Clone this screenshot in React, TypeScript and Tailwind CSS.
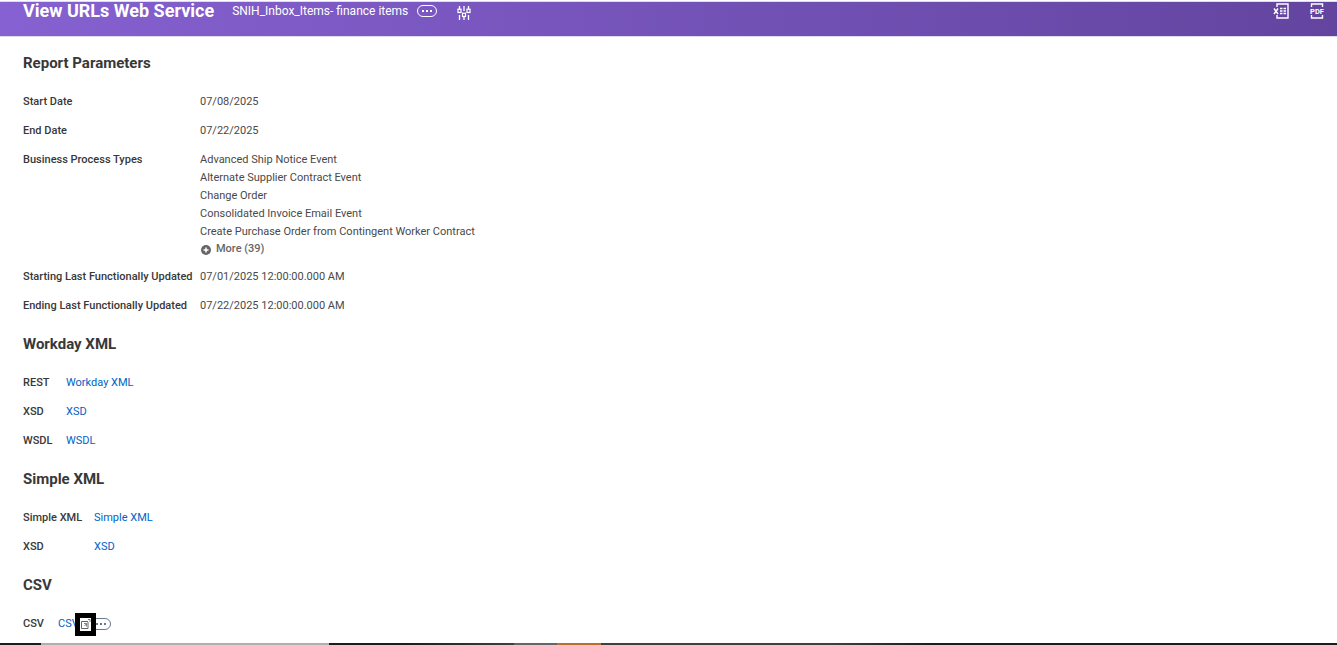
import type { ReactNode } from "react";

const processTypes = [
  "Advanced Ship Notice Event",
  "Alternate Supplier Contract Event",
  "Change Order",
  "Consolidated Invoice Email Event",
  "Create Purchase Order from Contingent Worker Contract",
];

function Section({ title, children }: { title: string; children: ReactNode }) {
  return (
    <section className="pb-3">
      <h2 className="mb-3 text-[15px] leading-6 font-bold text-[#383838]">{title}</h2>
      <dl>{children}</dl>
    </section>
  );
}

function Row({ label, width, children }: { label: string; width: string; children: ReactNode }) {
  return (
    <div className="flex py-[7px] text-[11px] leading-[15px]">
      <dt className={`${width} shrink-0 font-medium text-[#383838]`}>{label}</dt>
      <dd className="text-[#494949]">{children}</dd>
    </div>
  );
}

function Link({ children }: { children: ReactNode }) {
  return (
    <a href="#" className="text-[#0062c4] hover:underline">
      {children}
    </a>
  );
}

function Dots({ className }: { className: string }) {
  return (
    <svg viewBox="0 0 20 12" className={className} fill="none" stroke="currentColor" aria-hidden="true">
      <rect x="0.5" y="0.5" width="19" height="11" rx="5.5" />
      <path d="M5 5h2v2H5zM9 5h2v2H9zM13 5h2v2h-2z" fill="currentColor" stroke="none" />
    </svg>
  );
}

function SlidersIcon() {
  return (
    <svg viewBox="0 0 14 14" className="h-3.5 w-3.5" fill="none" stroke="currentColor" aria-hidden="true">
      <path strokeWidth="1.3" d="M2.5 0v3M2.5 9v5M7 0v5M7 11v3M11.5 0v3M11.5 9v5" />
      <rect x="1" y="3.2" width="3" height="3.3" strokeWidth="1.2" />
      <rect x="5.5" y="7.2" width="3" height="3.3" strokeWidth="1.2" />
      <rect x="10" y="3.2" width="3" height="3.3" strokeWidth="1.2" />
    </svg>
  );
}

function ExcelIcon() {
  return (
    <svg viewBox="0 0 16 16" className="h-4 w-4" fill="none" stroke="currentColor" aria-hidden="true">
      <path strokeWidth="1.4" d="M4 4V1h11v14H4v-3" />
      <path strokeWidth="1.5" d="M1 5.5l4 5.5M5 5.5L1 11" />
      <path strokeWidth="1.3" d="M7 5.5h2.5M10.5 5.5H13M7 8h2.5M10.5 8H13M7 10.5h2.5M10.5 10.5H13" />
    </svg>
  );
}

function PdfIcon() {
  return (
    <svg viewBox="0 0 16 16" className="h-4 w-4" fill="none" stroke="currentColor" aria-hidden="true">
      <path strokeWidth="1.4" d="M2.5 4V1h11v3M2.5 12v3h11v-3" />
      <text
        x="8"
        y="10.5"
        textAnchor="middle"
        fontSize="7.5"
        fontWeight="700"
        fontFamily="Roboto, sans-serif"
        fill="currentColor"
        stroke="none"
      >
        PDF
      </text>
    </svg>
  );
}

function PlusIcon() {
  return (
    <svg viewBox="0 0 10 10" className="mt-0.5 h-2.5 w-2.5" aria-hidden="true">
      <circle cx="5" cy="5" r="5" fill="#666666" />
      <path d="M5 2.5v5M2.5 5h5" stroke="#ffffff" strokeWidth="1.5" />
    </svg>
  );
}

function ExportIcon() {
  return (
    <svg viewBox="0 0 11 13" className="h-[13px] w-[11px]" fill="none" stroke="#666666" aria-hidden="true">
      <path d="M8 3.5H1.5v7h6.500V4" />
      <path d="M4 5.500h2.500V8.500M6.500 5.500L4.500 8" strokeWidth="0.8" />
      <path d="M8 1.500h2V4" strokeWidth="0.9" />
    </svg>
  );
}

export default function App() {
  return (
    <div className="flex min-h-screen flex-col bg-white font-[Roboto,sans-serif]">
      <header className="mt-px flex h-9 items-start justify-between border-y border-[#dedbea] bg-linear-to-r from-[#8661d1] to-[#6345a0] pr-3 pl-[23px] text-white">
        <div className="flex items-center">
          <h1 className="text-lg leading-[18px] font-bold">View URLs Web Service</h1>
          <span className="ml-[18px] text-xs leading-[18px]">SNIH_Inbox_Items- finance items</span>
          <button type="button" aria-label="Related actions" className="ml-[9px]">
            <Dots className="h-3 w-5" />
          </button>
          <button type="button" aria-label="Report settings" className="ml-5 pt-1">
            <SlidersIcon />
          </button>
        </div>
        <div className="flex gap-5 pt-px">
          <button type="button" aria-label="Export to Excel">
            <ExcelIcon />
          </button>
          <button type="button" aria-label="Export to PDF">
            <PdfIcon />
          </button>
        </div>
      </header>

      <main className="grow px-[23px] pt-3.5">
        <Section title="Report Parameters">
          <Row label="Start Date" width="w-[177px]">07/08/2025</Row>
          <Row label="End Date" width="w-[177px]">07/22/2025</Row>
          <Row label="Business Process Types" width="w-[177px]">
            <ul className="mb-[3px] flex flex-col gap-[3px]">
              {processTypes.map((name) => (
                <li key={name}>{name}</li>
              ))}
            </ul>
            <button type="button" className="flex items-center gap-[5px] pl-px leading-[13px] font-medium text-[#666666]">
              <PlusIcon />
              More (39)
            </button>
          </Row>
          <Row label="Starting Last Functionally Updated" width="w-[177px]">07/01/2025 12:00:00.000 AM</Row>
          <Row label="Ending Last Functionally Updated" width="w-[177px]">07/22/2025 12:00:00.000 AM</Row>
        </Section>

        <Section title="Workday XML">
          <Row label="REST" width="w-[43px]"><Link>Workday XML</Link></Row>
          <Row label="XSD" width="w-[43px]"><Link>XSD</Link></Row>
          <Row label="WSDL" width="w-[43px]"><Link>WSDL</Link></Row>
        </Section>

        <Section title="Simple XML">
          <Row label="Simple XML" width="w-[71px]"><Link>Simple XML</Link></Row>
          <Row label="XSD" width="w-[71px]"><Link>XSD</Link></Row>
        </Section>

        <section>
          <h2 className="mb-3 text-[15px] leading-6 font-bold text-[#383838]">CSV</h2>
          <dl className="flex h-[29px] items-center text-[11px] leading-[15px]">
            <dt className="w-[35px] font-medium text-[#383838]">CSV</dt>
            <dd className="relative flex items-center">
              <Link>CSV</Link>
              <button type="button" aria-label="Related actions" className="ml-3 text-[#69788c]">
                <Dots className="h-3 w-5" />
              </button>
              <button
                type="button"
                aria-label="Open in new window"
                className="absolute top-1/2 left-[17px] -mt-[11px] border-[5px] border-black bg-white"
              >
                <ExportIcon />
              </button>
            </dd>
          </dl>
        </section>
      </main>

      <footer className="flex h-0.5 bg-[#1d1b1e]">
        <div className="w-[3.07%]" />
        <div className="w-[21.54%] bg-[#b0b0b0]" />
        <div className="w-[13.85%] bg-linear-to-r from-[#1d1b1e] from-40% to-[#403f41]" />
        <div className="w-[3.22%] bg-[#666666]" />
        <div className="w-[3.29%] bg-[#bd6c2c]" />
        <div className="w-[17%] bg-[#403f41]" />
        <div className="w-[8%] bg-linear-to-r from-[#403f41] to-[#1d1b1e]" />
      </footer>
    </div>
  );
}
